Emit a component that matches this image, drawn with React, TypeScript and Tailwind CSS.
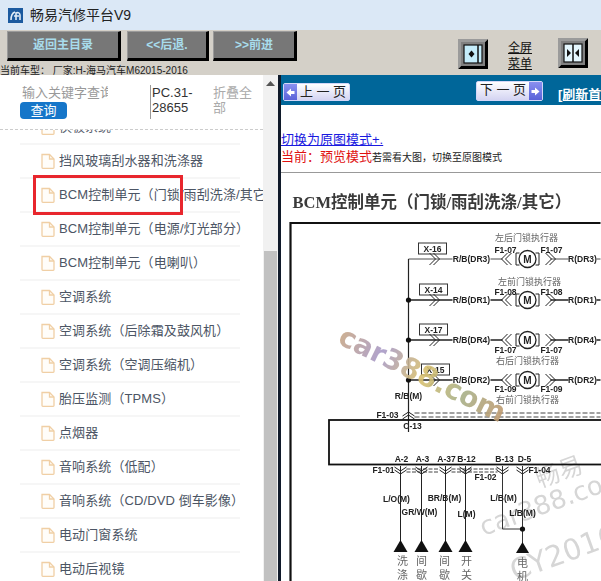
const sans = "font-['Liberation_Sans','Noto_Sans_CJK_SC',sans-serif]";
const lab = "font-['Liberation_Sans',sans-serif] text-[8.5px] font-bold fill-[#222]";
const mLab = "font-['Liberation_Sans',sans-serif] text-[10px] font-bold fill-[#222]";
const cn = "font-['Noto_Sans_CJK_SC',sans-serif] text-[9px] fill-[#666]";
const cnBig = "font-['Noto_Sans_CJK_SC',sans-serif] text-[11px] fill-[#666]";

const rows = [
  "挡风玻璃刮水器和洗涤器",
  "BCM控制单元（门锁/雨刮洗涤/其它）",
  "BCM控制单元（电源/灯光部分）",
  "BCM控制单元（电喇叭）",
  "空调系统",
  "空调系统（后除霜及鼓风机）",
  "空调系统（空调压缩机）",
  "胎压监测（TPMS）",
  "点烟器",
  "音响系统（低配）",
  "音响系统（CD/DVD 倒车影像）",
  "电动门窗系统",
  "电动后视镜",
];

function FileIcon() {
  return (
    <svg width="14" height="16" viewBox="0 0 14 16" fill="none" stroke="#f0cfa5" strokeWidth="1.3" className="shrink-0">
      <path d="M1 1.500h7.500l4.500 4.500v8.500a.8.8 0 0 1-.8.8H1.800a.8.8 0 0 1-.8-.8z" fill="#fffdf9" />
      <path d="M8.500 1.500V6H13" />
    </svg>
  );
}

function ToolBtn({ label, w }: { label: string; w: string }) {
  return (
    <button className={`${w} h-[30px] bg-[#777777] border-t border-l border-t-[#9a9a9a] border-l-[#9a9a9a] border-r-[3px] border-b-[3px] border-r-black border-b-black text-[#a8dcec] font-bold text-[12px] text-center`}>
      {label}
    </button>
  );
}

function SplitIcon({ two }: { two?: boolean }) {
  return (
    <svg width="30" height="30" viewBox="0 0 30 30">
      <rect width="30" height="30" fill="#808080" />
      <path d="M0 30L3 27H27V3L30 0V30Z" fill="#000" />
      <path d="M0 0H30L27 3H3V27L0 30Z" fill="#9b9b9b" />
      <rect x="6" y="6" width="18" height="18" fill={two ? "#e4f6fd" : "#c4ecfa"} stroke="#111" strokeWidth="1.200" />
      {two ? (
        <>
          <path d="M15 6V24" stroke="#111" strokeWidth="1.500" />
          <path d="M13 15L9 11V19zM17 15L21 11V19z" fill="#111" />
        </>
      ) : (
        <>
          <path d="M20 6V24" stroke="#111" strokeWidth="1.500" />
          <path d="M10.500 15l3-3.500 3 3.500-3 3.500z" fill="#111" />
        </>
      )}
    </svg>
  );
}

function PageBtn({ label, dir, raised }: { label: string; dir: "l" | "r"; raised?: boolean }) {
  const arrow = (
    <span className="w-[13px] self-stretch flex items-center justify-center bg-gradient-to-b from-[#8a90f0] to-[#5a62d8]">
      <svg width="9" height="9" viewBox="0 0 9 9" fill="#fff">
        {dir === "l" ? <path d="M0.500 4.500L5 0.500V3H8.500V6H5V8.500z" /> : <path d="M8.500 4.500L4 0.500V3H0.500V6H4V8.500z" />}
      </svg>
    </span>
  );
  return (
    <div className={`w-[67px] flex items-stretch border border-[#d4d7f8] rounded-[2px] bg-gradient-to-b from-white to-[#d4d4f2] text-[13px] text-[#222] ${raised ? "h-[20px]" : "h-[18px]"}`}>
      {dir === "l" && arrow}
      <span className="flex-1 text-center leading-[16px] whitespace-pre">{label}</span>
      {dir === "r" && arrow}
    </div>
  );
}

function Chevron({ x, y, dir }: { x: number; y: number; dir: 1 | -1 }) {
  return (
    <g fill="none" stroke="#222" strokeWidth="1">
      <path d={`M${x} ${y - 6}l${dir * 6} 6l${-dir * 6} 6`} />
      <path d={`M${x + dir * 4} ${y - 6}l${dir * 6} 6l${-dir * 6} 6`} />
    </g>
  );
}

function Harness({ y, tag, tx, tw, left, right, c, labY, dot, weak }: { y: number; tag: string; tx: number; tw: number; left: string; right: string; c: string; labY: number; dot?: boolean; weak?: boolean }) {
  return (
    <g>
      <path d={`M409 ${y}H453M491 ${y}H503M551 ${y}H569M597 ${y}H601`} stroke="#222" strokeWidth={weak ? 0.8 : 1.3} fill="none" />
      {dot && <circle cx="409" cy={y} r="2.600" fill="#111" />}
      <rect x={tx} y={y - 16} width={tw} height={11} fill="#fff" stroke="#333" strokeWidth="1" />
      <text x={tx + tw / 2} y={y - 7.500} textAnchor="middle" className={lab}>{tag}</text>
      <Chevron x={430} y={y} dir={1} />
      <text x="472" y={y + 3} textAnchor="middle" className={lab}>{left}</text>
      <Chevron x={512} y={y} dir={-1} />
      <Chevron x={546} y={y} dir={1} />
      <path d={`M520 ${y - 6}h-3.500v12h3.500M536 ${y - 6}h3.500v12h-3.500`} fill="none" stroke="#222" strokeWidth="1" />
      <circle cx="528" cy={y} r="8.500" fill="#fff" stroke="#222" strokeWidth="1.300" />
      <text x="528" y={y + 3.500} textAnchor="middle" className={mLab}>M</text>
      <text x="583" y={y + 3} textAnchor="middle" className={lab}>{right}</text>
      <text x="506" y={labY} textAnchor="middle" className={lab}>{c}</text>
      <text x="552" y={labY} textAnchor="middle" className={lab}>{c}</text>
    </g>
  );
}

function Drop({ x, top, a, b, ly, l, lx, cx }: { x: number; top: string; a: string; b: string; ly: number; l: string; lx: number; cx: number }) {
  return (
    <g>
      <text x={x + 1} y="462" textAnchor="middle" className={lab}>{top}</text>
      <path d={`M${x} 466V542`} stroke="#222" strokeWidth="1" />
      <path d={`M${x - 6} 467l6 4 6-4M${x - 6} 470l6 4 6-4`} stroke="#222" fill="none" />
      <path d={`M${x} 540l7 12h-14z`} fill="#111" />
      <text x={lx} y={ly} textAnchor="middle" className={lab}>{l}</text>
      <text x={cx} y="565" textAnchor="middle" className={cnBig}>{a}</text>
      <text x={cx} y="579" textAnchor="middle" className={cnBig}>{b}</text>
    </g>
  );
}

function Diagram() {
  return (
    <svg viewBox="282 173 319 408" className="w-full h-[408px] block blur-[0.35px]">
      <defs>
        <linearGradient id="wm" x1="0" x2="1" y1="0" y2="0">
          <stop offset="0" stopColor="#c8a888" />
          <stop offset="0.25" stopColor="#a89ac8" />
          <stop offset="0.5" stopColor="#d8c070" />
          <stop offset="0.75" stopColor="#a8b088" />
          <stop offset="1" stopColor="#c09a70" />
        </linearGradient>
      </defs>
      <g className="font-['DejaVu_Sans','Noto_Sans_CJK_SC',sans-serif] fill-[#d6d6d6]">
        <text transform="translate(540 488) rotate(-20)" className="text-[24px]">畅易</text>
        <text transform="translate(484 536) rotate(-20)" className="text-[26px]">car388.com</text>
        <text transform="translate(515 581) rotate(-20)" className="text-[29px]">CY2016</text>
      </g>
      <text x="293" y="208" className="font-['Liberation_Serif','Noto_Sans_CJK_SC',serif] text-[16.5px] font-bold fill-[#3a3a3a]">BCM控制单元（门锁/雨刮洗涤/其它）</text>
      <path d="M291 581V223H601" fill="none" stroke="#111" strokeWidth="2.200" />

      <text x="527" y="241" textAnchor="middle" className={cn}>左后门锁执行器</text>
      <text x="530" y="285" textAnchor="middle" className={cn}>左前门锁执行器</text>
      <text x="528" y="364" textAnchor="middle" className={cn}>右后门锁执行器</text>
      <text x="528" y="403" textAnchor="middle" className={cn}>右前门锁执行器</text>

      <path d="M409 259V432" stroke="#222" strokeWidth="1.200" />
      <Harness y={259} tag="X-16" tx={419} tw={28} left="R/B(DR3)" right="R(DR3)" c="F1-07" labY={253} weak />
      <Harness y={300} tag="X-14" tx={420} tw={28} left="R/B(DR1)" right="R(DR1)" c="F1-08" labY={295} dot />
      <Harness y={340} tag="X-17" tx={420} tw={28} left="R/B(DR4)" right="R(DR4)" c="F1-07" labY={353} dot />
      <Harness y={380} tag="X-15" tx={422} tw={28} left="R/B(DR2)" right="R(DR2)" c="F1-09" labY={392} dot />
      <text x="409" y="399" textAnchor="middle" className={lab}>R/B(M)</text>

      <path d="M403 416l6-4 6 4M403 419l6-4 6 4" stroke="#222" fill="none" />
      <path d="M415 413H601M415 417H601" stroke="#444" strokeDasharray="5 2" strokeWidth="1" />
      <text x="388" y="418" textAnchor="middle" className={lab}>F1-03</text>
      <text x="413" y="429" textAnchor="middle" className={lab}>C-13</text>
      <rect x="329.500" y="420" width="290" height="44.500" fill="none" stroke="#111" strokeWidth="1.800" />

      <text x="384" y="473" textAnchor="middle" className={lab}>F1-01</text>
      <text x="486" y="480" textAnchor="middle" className={lab}>F1-02</text>
      <text x="540" y="473" textAnchor="middle" className={lab}>F1-04</text>
      <path d="M407 469H440M452 469H498M407 472H440M452 472H498" stroke="#444" strokeDasharray="4 1.500" />
      <Drop x={401} top="A-2" a="洗" b="涤" l="L/O(M)" lx={397} ly={502} cx={403} />
      <Drop x={422} top="A-3" a="间" b="歇" l="GR/W(M)" lx={420} ly={515} cx={422} />
      <Drop x={446} top="A-37" a="间" b="歇" l="BR/B(M)" lx={445} ly={501} cx={445} />
      <Drop x={466} top="B-12" a="开" b="关" l="L(M)" lx={467} ly={517} cx={467} />

      <text x="505" y="462" textAnchor="middle" className={lab}>B-13</text>
      <text x="525" y="462" textAnchor="middle" className={lab}>D-5</text>
      <path d="M503 466V529H523M523 466V545" stroke="#333" fill="none" />
      <path d="M497 467l6 4 6-4M497 470l6 4 6-4M517 467l6 4 6-4M517 470l6 4 6-4" stroke="#222" fill="none" />
      <circle cx="523" cy="529" r="2.600" fill="#111" />
      <path d="M523 542l6.500 11h-13z" fill="#111" />
      <text x="504" y="501" textAnchor="middle" className={lab}>L/B(M)</text>
      <text x="523" y="516" textAnchor="middle" className={lab}>L/B(M)</text>
      <text x="523" y="567" textAnchor="middle" className={cnBig}>电</text>
      <text x="523" y="581" textAnchor="middle" className={cnBig}>机</text>

      <text transform="translate(337 343) rotate(26)" textLength="182" className="font-['DejaVu_Sans',sans-serif] text-[28px] font-bold fill-[url(#wm)] opacity-90">car388.com</text>
    </svg>
  );
}

export default function App() {
  return (
    <div className={`w-[601px] h-[581px] overflow-hidden flex flex-col bg-white ${sans}`}>
      <div className="h-[30px] shrink-0 bg-[#dbe8f6] flex items-center pl-[8px] gap-[7px] text-[14px] text-[#222]">
        <svg width="15" height="15" viewBox="0 0 15 15">
          <rect width="15" height="15" fill="#1c5a9f" />
          <path d="M3 12c0-4 1-7 4-8M8 12V5c2-1 4 0 4 2v5M6 8h5" stroke="#dfeaf5" strokeWidth="1.600" fill="none" />
        </svg>
        <span>畅易汽修平台V9</span>
      </div>

      <div className="h-[45px] shrink-0 bg-[#d4d0c8] relative">
        <div className="flex items-start pl-[7px] pt-px">
          <ToolBtn label="返回主目录" w="w-[114px]" />
          <div className="w-[6px]" />
          <ToolBtn label="<<后退." w="w-[82px]" />
          <div className="w-[4px]" />
          <ToolBtn label=">>前进" w="w-[84px]" />
          <div className="ml-[161px] mt-[8px] flex items-start">
            <SplitIcon />
            <div className="w-[24px] ml-[20px] mr-[26px] mt-px text-[12px] leading-[16px] text-center text-[#111] underline">全屏菜单</div>
            <div className="-mt-px"><SplitIcon two /></div>
          </div>
        </div>
        <div className="absolute left-0 top-[35px] text-[10px] leading-[11px] text-[#222] whitespace-nowrap">当前车型： 厂家:H-海马汽车M62015-2016</div>
      </div>

      <div className="flex-1 min-h-0 flex">
        <div className="w-[263px] shrink-0 flex flex-col relative">
          <div className="h-[55px] shrink-0 border-b border-dashed border-[#ccc] flex pt-[10px] pl-[20px] text-[13px] leading-[15px] relative z-10 bg-white">
            <div className="w-[130px] shrink-0">
              <div className="pl-[2px] w-[88px] h-[17px] overflow-hidden whitespace-nowrap text-[#999]">输入关键字查询</div>
              <div className="w-[47px] h-[17px] rounded-[4px] bg-[#1676c9] text-white text-center leading-[17px]">查询</div>
            </div>
            <div className="w-[62px] shrink-0 h-[34px] border-l border-[#999] text-[#333] pl-px">PC.31-<br />28655</div>
            <div className="w-[40px] shrink-0 ml-px text-[#aaa]">折叠全部</div>
          </div>
          <div className="flex-1 min-h-0 overflow-hidden -mt-[19px]">
            <div className="h-[34px] ml-[20px] w-[220px] border-b-2 border-[#f6f6f6] flex items-center pl-[21px] gap-[4px]">
              <FileIcon />
              <span className="text-[13px] text-[#5a6270]">侠板系统</span>
            </div>
            {rows.map((r) => (
              <div key={r} className="h-[34px] ml-[20px] flex items-center pl-[21px] gap-[4px] border-b-2 border-[#f6f6f6] w-[220px] whitespace-nowrap">
                <FileIcon />
                <span className="text-[13px] text-[#4c5564] tracking-[0.1px]">{r}</span>
              </div>
            ))}
          </div>
          <div className="absolute left-[33px] top-[100px] w-[150px] h-[40px] border-[3px] border-[#e8262d] z-20" />
        </div>

        <div className="w-[15px] shrink-0 bg-[#f1f1f1] flex flex-col items-center">
          <svg width="9" height="5" viewBox="0 0 9 5" className="mt-[6px] mb-[165px]">
            <path d="M4.500 0L9 5H0z" fill="#555" />
          </svg>
          <div className="w-[13px] flex-1 bg-[#c1c1c1]" />
        </div>

        <div className="w-[3px] shrink-0 bg-[#101a2a]" />

        <div className="flex-1 min-w-0 flex flex-col">
          <div className="h-[30px] shrink-0 bg-[#006699] flex items-start pl-[2px] overflow-hidden whitespace-nowrap">
            <div className="mt-[8px]"><PageBtn label="上 一 页" dir="l" /></div>
            <div className="mt-[6px] ml-[126px]"><PageBtn label="下 一 页" dir="r" raised /></div>
            <span className="mt-[12px] ml-[15px] text-[13px] leading-[15px] font-bold text-white underline">[刷新首页]</span>
          </div>
          <div className="h-[68px] shrink-0 border-b border-[#999] pt-[26px] text-[13px] leading-[17px] whitespace-nowrap">
            <div className="text-[#1a1ae0] underline">切换为原图模式+.</div>
            <div className="text-[#e01010]">当前：预览模式<span className="text-[10px] text-[#222]">若需看大图，切换至原图模式</span></div>
          </div>
          <Diagram />
        </div>
      </div>
    </div>
  );
}
